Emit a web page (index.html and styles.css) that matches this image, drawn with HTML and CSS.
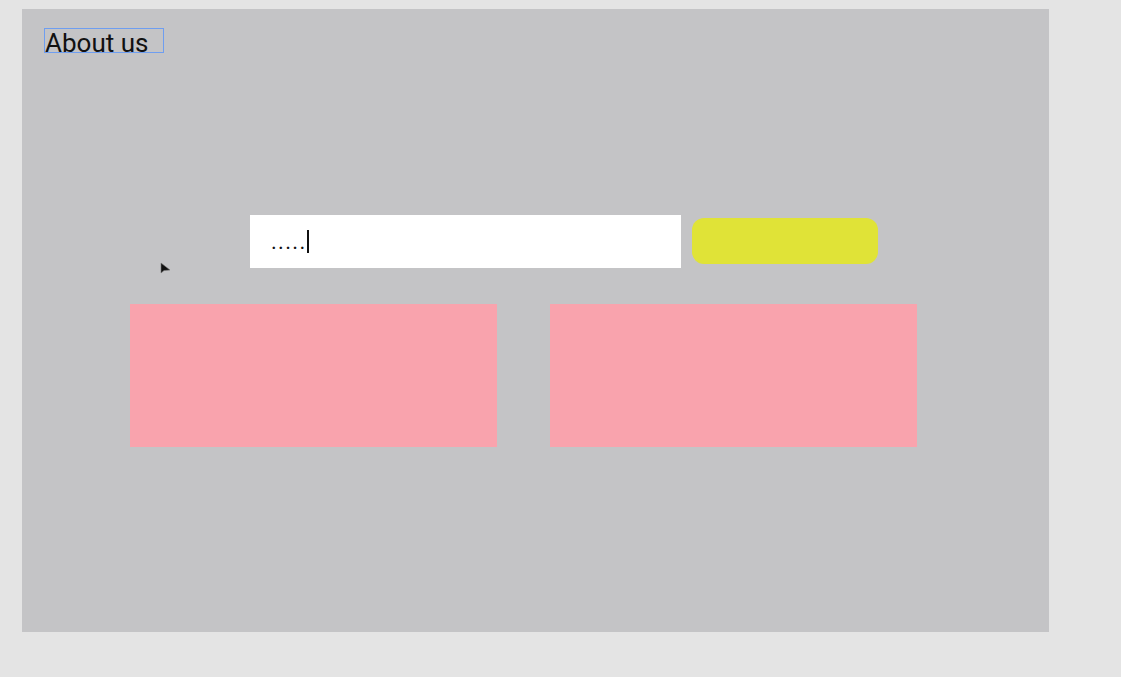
FILE: index.html
```html
<!DOCTYPE html>
<html>
<head>
<meta charset="utf-8">
<link rel="stylesheet" href="styles.css">
</head>
<body>
<div class="canvas">
  <div class="heading">About us</div>
  <div class="search-row">
    <div class="input"><span class="dots">.....</span><span class="caret"></span></div>
    <div class="button"></div>
  </div>
  <div class="cards">
    <div class="card"></div>
    <div class="card"></div>
  </div>
  <svg class="pointer" width="12" height="14" viewBox="0 0 12 14"><path d="M1 1 L1 11 L4 8.5 L10 8 Z" fill="#111" stroke="#777" stroke-width="0.6"/></svg>
</div>
</body>
</html>
```
FILE: styles.css
```css
html, body {
  margin: 0;
  padding: 0;
  background: #e4e4e4;
  width: 1121px;
  height: 677px;
  overflow: hidden;
}
.canvas {
  position: relative;
  margin: 9px 0 0 22px;
  width: 1027px;
  height: 623px;
  background: #c4c4c6;
  padding-top: 19px;
  box-sizing: border-box;
  display: flex;
  flex-direction: column;
  font-family: Roboto, "Liberation Sans", sans-serif;
}
.heading {
  margin-left: 22px;
  width: 120px;
  height: 25px;
  box-sizing: border-box;
  border: 1px solid #6f9ef0;
  font-size: 26px;
  line-height: 29px;
  color: #111;
  padding-left: 0;
  white-space: nowrap;
  overflow: visible;
}
.search-row {
  margin-top: 162px;
  margin-left: 228px;
  display: flex;
  align-items: flex-start;
  gap: 11px;
}
.input {
  width: 431px;
  height: 53px;
  background: #ffffff;
  display: flex;
  align-items: center;
  padding-left: 21px;
  box-sizing: border-box;
}
.dots {
  font-size: 22px;
  color: #111;
  letter-spacing: 1.3px;
  line-height: 23px;
}
.caret {
  display: inline-block;
  width: 2px;
  height: 23px;
  background: #111;
  margin-left: 0;
}
.button {
  margin-top: 3px;
  width: 186px;
  height: 46px;
  border-radius: 12px;
  background: #e0e337;
}
.cards {
  margin-top: 36px;
  margin-left: 108px;
  display: flex;
  gap: 53px;
}
.card {
  width: 367px;
  height: 143px;
  background: #f9a3ad;
}
.pointer {
  position: absolute;
  left: 138px;
  top: 253px;
}
```
